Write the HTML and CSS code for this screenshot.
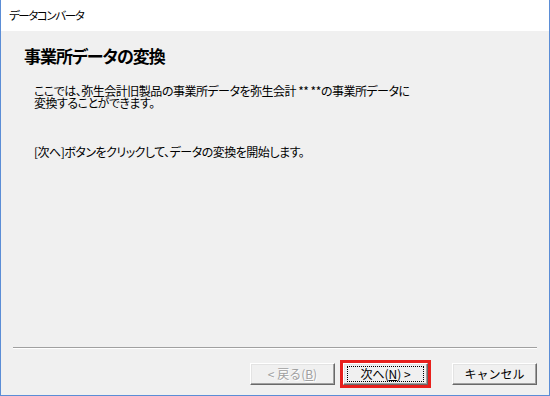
FILE: index.html
```html
<!DOCTYPE html>
<html lang="ja">
<head>
<meta charset="utf-8">
<title>データコンバータ</title>
<link rel="stylesheet" href="styles.css">
</head>
<body>
<div class="window">
  <div class="titlebar">データコンバータ</div>
  <div class="content">
    <h1 class="heading">事業所データの変換</h1>
    <p class="text"><span class="line">ここでは、弥生会計旧製品の事業所データを弥生会計 ** **の事業所データに</span><span class="line">変換することができます。</span></p>
    <p class="text text-gap">[次へ]ボタンをクリックして、データの変換を開始します。</p>
  </div>
  <div class="footer">
    <div class="separator"></div>
    <div class="buttons">
      <button class="btn btn-disabled" type="button">&lt; 戻る(<u>B</u>)</button>
      <button class="btn btn-focus" type="button"><span class="focus-rect">次へ(<u>N</u>) &gt;</span></button>
      <button class="btn btn-cancel" type="button">キャンセル</button>
    </div>
  </div>
</div>
</body>
</html>
```

FILE: styles.css
```css
html, body {
  margin: 0;
  padding: 0;
  background: #ffffff;
}

body {
  font-family: "Noto Sans CJK JP", "Noto Sans", sans-serif;
  font-feature-settings: "palt";
  color: #000;
}

.window {
  width: 550px;
  height: 396px;
  box-sizing: border-box;
  border: 1px solid #5b8dd6;
  border-top: none;
  background: #f0f0f0;
  display: flex;
  flex-direction: column;
}

.titlebar {
  height: 31px;
  flex: none;
  background: #ffffff;
  display: flex;
  align-items: center;
  padding-left: 8px;
  font-size: 11.5px;
  letter-spacing: -1.4px;
  padding-bottom: 1px;
  box-sizing: border-box;
}

.content {
  flex: 1;
  padding: 13px 0 0 23px;
}

.heading {
  margin: 0;
  font-size: 17px;
  line-height: 24px;
  font-weight: 700;
  letter-spacing: -1px;
}

.text {
  margin: 17px 0 0 10px;
  font-size: 12px;
  line-height: 12px;
  letter-spacing: -0.5px;
}

.line {
  display: block;
  height: 12px;
  overflow: visible;
}

.text-gap {
  margin-top: 37px;
}

.footer {
  flex: none;
}

.separator {
  margin: 0 12px 0 12px;
  border-top: 1px solid #a0a0a0;
  border-bottom: 1px solid #ffffff;
}

.buttons {
  display: flex;
  justify-content: flex-end;
  padding: 14px 12px 10px 0;
}

.btn {
  width: 85px;
  height: 22px;
  box-sizing: border-box;
  margin: 0;
  padding: 0;
  font-family: inherit;
  font-size: 12px;
  line-height: 14px;
  background: #f0f0f0;
  color: #000;
  border: 1px solid;
  border-color: #ffffff #696969 #696969 #ffffff;
  box-shadow: inset -1px -1px 0 #a0a0a0, inset 1px 1px 0 #e3e3e3;
  display: flex;
  align-items: center;
  justify-content: center;
}

.btn u {
  text-decoration: underline;
}

.btn-disabled {
  color: #a0a0a0;
  text-shadow: 1px 1px 0 #ffffff;
}

.btn-focus {
  margin-left: 8px;
  outline: 3px solid #e8201c;
  outline-offset: 0;
}

.focus-rect {
  display: flex;
  align-items: center;
  justify-content: center;
  width: 77px;
  height: 16px;
  box-sizing: border-box;
  border: 1px dotted #000;
}

.btn-cancel {
  margin-left: 24px;
}
```
